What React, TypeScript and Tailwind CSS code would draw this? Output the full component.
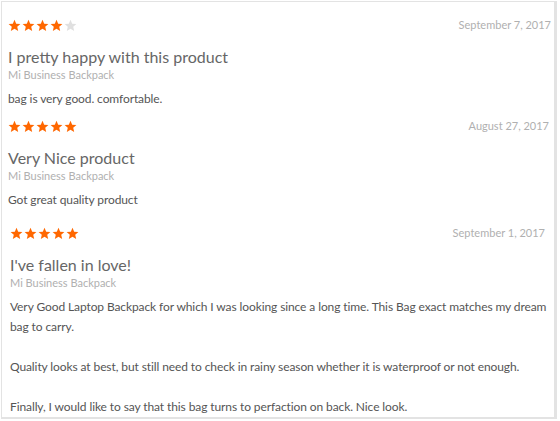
import React from 'react';

type Review = {
  rating: number;
  date: string;
  title: string;
  product: string;
  body: string[];
};

const reviews: Review[] = [
  {
    rating: 4,
    date: 'September 7, 2017',
    title: 'I pretty happy with this product',
    product: 'Mi Business Backpack',
    body: ['bag is very good. comfortable.'],
  },
  {
    rating: 5,
    date: 'August 27, 2017',
    title: 'Very Nice product',
    product: 'Mi Business Backpack',
    body: ['Got great quality product'],
  },
  {
    rating: 5,
    date: 'September 1, 2017',
    title: "I've fallen in love!",
    product: 'Mi Business Backpack',
    body: [
      'Very Good Laptop Backpack for which I was looking since a long time. This Bag exact matches my dream bag to carry.',
      'Quality looks at best, but still need to check in rainy season whether it is waterproof or not enough.',
      'Finally, I would like to say that this bag turns to perfaction on back. Nice look.',
    ],
  },
];

function Star({ filled }: { filled: boolean }) {
  return (
    <svg width="13" height="13" viewBox="0 0 24 24" className={filled ? 'fill-[#ff6700]' : 'fill-[#e0e0e0]'}>
      <path d="M12 1.5l3.1 7.2 7.8.6-5.9 5.1 1.8 7.6L12 17.9 5.2 22l1.8-7.6L1.1 9.3l7.8-.6z" />
    </svg>
  );
}

function ReviewItem({ review }: { review: Review }) {
  return (
    <div className="pb-[7px] even:pr-[2px] last:pt-[6px] last:pl-[2px]">
      <div className="flex items-center justify-between h-[20px]">
        <div className="flex gap-[1px]">
          {[1, 2, 3, 4, 5].map((n) => (
            <Star key={n} filled={n <= review.rating} />
          ))}
        </div>
        <span className="text-[11px] text-[#b0b0b0] pr-0 [div:last-child>div>&]:pr-[6px]">{review.date}</span>
      </div>
      <h3 className="mt-[11px] text-[16px] leading-[22px] text-[#666]">{review.title}</h3>
      <p className="text-[11px] leading-[14px] text-[#b0b0b0]">{review.product}</p>
      <div className="mt-[7px] text-[12px] leading-[20px] text-[#555] tracking-[-0.1px] flex flex-col gap-[20px]">
        {review.body.map((p, i) => (
          <p key={i}>{p}</p>
        ))}
      </div>
    </div>
  );
}

export default function App() {
  return (
    <div className="w-[560px] h-[421px] bg-white p-[1px]" style={{ fontFamily: 'Lato, "Open Sans", sans-serif' }}>
      <div className="w-[556px] h-[418px] border border-[#e3e3e3] border-r-[3px] border-b-[2px] pl-[6px] pr-[3px] pt-[13px] overflow-hidden">
        {reviews.map((r, i) => (
          <ReviewItem key={i} review={r} />
        ))}
      </div>
    </div>
  );
}
